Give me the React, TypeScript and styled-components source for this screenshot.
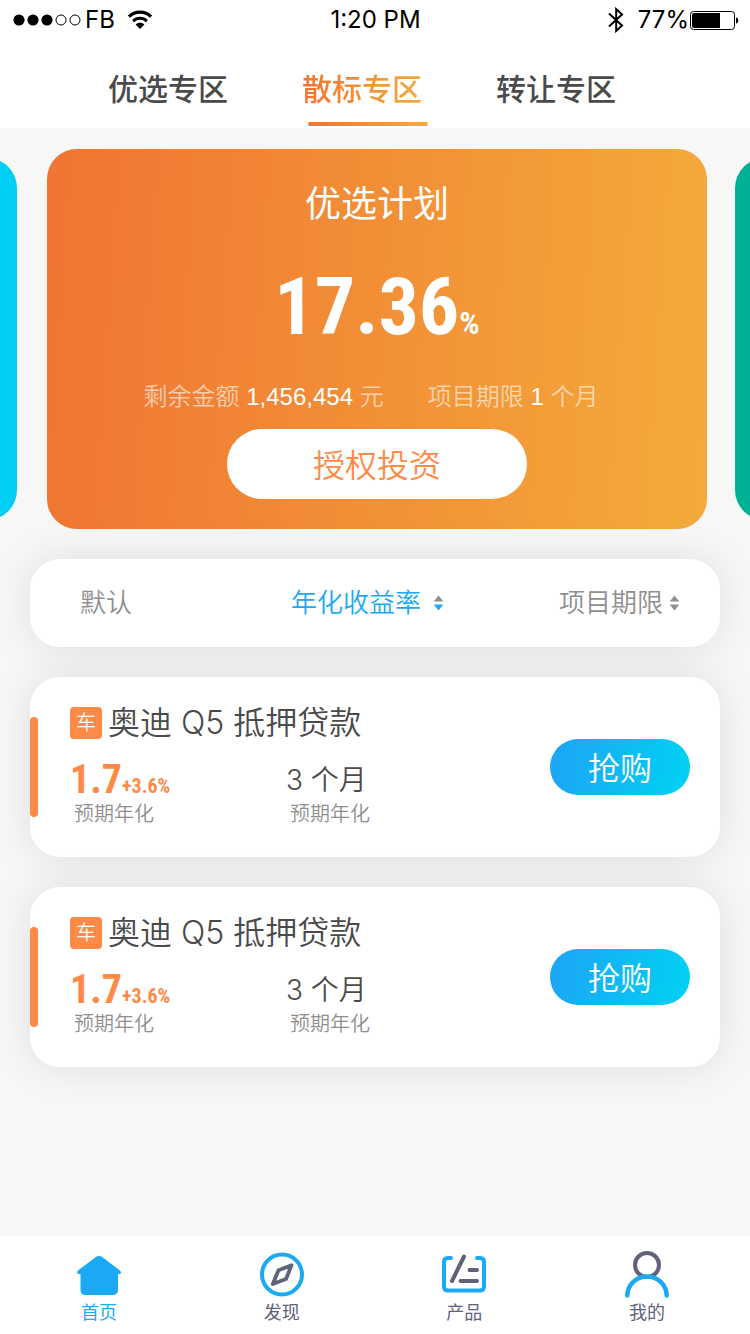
import React from "react";
import styled, { createGlobalStyle, css } from "styled-components";

const sans = '"Inter", "Noto Sans CJK SC", sans-serif';
const helv = '"Liberation Sans", "Noto Sans CJK SC", sans-serif';
const narrow = '"Liberation Sans Narrow", "Roboto Condensed", "Liberation Sans", sans-serif';

const orange = "#ff8a47";
const blue = "#1ca9f4";
const slate = "#5f627a";
const orangeGradient = "linear-gradient(94deg, #f07432, #f4ab3b)";

const GlobalStyle = createGlobalStyle`
  *, *::before, *::after { box-sizing: border-box; }
  body { margin: 0; background: #f7f7f7; font-family: ${sans}; color: #4a4a4a; }
  button { border: 0; padding: 0; background: none; font: inherit; color: inherit; cursor: pointer; }
  h1, h2, p, ul { margin: 0; padding: 0; font-weight: inherit; }
  ul { list-style: none; }
`;

const Page = styled.div`
  min-height: 100vh;
  display: flex;
  flex-direction: column;
  overflow: hidden;
`;

const Header = styled.header`
  background: #fff;
`;

const StatusBar = styled.div`
  height: 40px;
  padding: 0 11px 0 12px;
  display: grid;
  grid-template-columns: 1fr auto 1fr;
  align-items: center;
  font-size: 24px;
  line-height: 32px;
  color: #000;
`;

const StatusGroup = styled.div<{ $end?: boolean }>`
  display: flex;
  align-items: center;
  justify-content: ${(p) => (p.$end ? "flex-end" : "flex-start")};
`;

const Carrier = styled.span`
  margin: 0 12px 0 3px;
`;

const BatteryLevel = styled.span`
  margin-left: 14px;
`;

const TabRow = styled.nav`
  display: flex;
  justify-content: center;
  gap: 74px;
  padding: 25px 26px 0 0;
`;

const Tab = styled.button<{ $active?: boolean }>`
  font-size: 30px;
  line-height: 48px;
  font-weight: 500;
  white-space: nowrap;
  ${(p) =>
    p.$active &&
    css`
      color: transparent;
      background: ${orangeGradient};
      background-clip: text;
      -webkit-background-clip: text;
    `}
`;

const IndicatorTrack = styled.div`
  display: flex;
  justify-content: center;
  padding: 9px 14px 2px 0;
`;

const Indicator = styled.span`
  width: 120px;
  height: 4px;
  border-radius: 2px;
  background: ${orangeGradient};
`;

const Carousel = styled.section`
  display: flex;
  align-items: center;
  padding-top: 21px;
`;

const SideSlide = styled.div<{ $side: "left" | "right" }>`
  flex: 0 0 60px;
  height: 362px;
  border-radius: 30px;
  ${(p) =>
    p.$side === "left"
      ? css`
          margin: 0 30px 0 -43px;
          background: #00cff5;
        `
      : css`
          margin: 0 -45px 0 28px;
          background: #00b295;
        `}
`;

const PlanCard = styled.article`
  flex: 1;
  min-width: 0;
  height: 380px;
  padding-top: 28px;
  display: flex;
  flex-direction: column;
  align-items: center;
  border-radius: 30px;
  background: ${orangeGradient};
  color: #fff;
`;

const PlanTitle = styled.h1`
  font-size: 36px;
  line-height: 54px;
`;

const PlanRate = styled.p`
  margin-top: 24px;
  display: flex;
  align-items: baseline;
  font: 700 80px/104px ${narrow};
`;

const PlanPercent = styled.span`
  font-size: 32px;
  line-height: 40px;
`;

const PlanFacts = styled.div`
  margin-top: 20px;
  padding-right: 12px;
  display: flex;
  gap: 44px;
  font: 350 24px/36px ${helv};
  color: rgba(255, 255, 255, 0.6);
  white-space: nowrap;
`;

const Strong = styled.span`
  color: #fff;
  font-weight: 400;
`;

const InvestButton = styled.button`
  width: 300px;
  height: 70px;
  margin-top: 14px;
  padding-bottom: 2px;
  border-radius: 35px;
  background: #fff;
  color: ${orange};
  font-size: 32px;
  font-weight: 350;
`;

const Content = styled.main`
  padding: 30px;
  display: flex;
  flex-direction: column;
  gap: 30px;
`;

const panel = css`
  border-radius: 30px;
  background: #fff;
  box-shadow: 0 0 40px rgba(0, 0, 0, 0.1);
`;

const SortBar = styled.div`
  ${panel}
  height: 88px;
  padding: 0 40px 0 50px;
  display: flex;
  align-items: center;
  justify-content: space-between;
`;

const SortButton = styled.button<{ $active?: boolean; $gap?: number }>`
  min-width: 96px;
  display: flex;
  align-items: center;
  gap: ${(p) => p.$gap ?? 6}px;
  font-size: 26px;
  line-height: 40px;
  font-weight: 350;
  white-space: nowrap;
  color: ${(p) => (p.$active ? blue : "#8f8f8f")};
`;

const LoanList = styled.ul`
  display: flex;
  flex-direction: column;
  gap: 30px;
`;

const LoanCard = styled.li`
  ${panel}
  height: 180px;
  padding-right: 30px;
  display: flex;
  align-items: center;
`;

const Accent = styled.span`
  width: 8px;
  height: 100px;
  border-radius: 4px;
  background: ${orange};
`;

const LoanBody = styled.div`
  flex: 1;
  padding: 0 0 8px 32px;
`;

const LoanTitle = styled.h2`
  margin-bottom: 12px;
  display: flex;
  align-items: center;
  gap: 6px;
  font-size: 32px;
  line-height: 48px;
  font-weight: 350;
  white-space: nowrap;
`;

const Tag = styled.span`
  width: 32px;
  height: 32px;
  border-radius: 4px;
  background: ${orange};
  color: #fff;
  font-size: 20px;
  line-height: 32px;
  text-align: center;
`;

const LoanStats = styled.div`
  display: grid;
  grid-template-columns: 216px auto;
  justify-content: start;
`;

const StatRate = styled.p`
  display: flex;
  align-items: baseline;
  font: 700 40px/42px ${narrow};
  color: ${orange};
`;

const StatBonus = styled.span`
  font-size: 20px;
  line-height: 20px;
`;

const StatTerm = styled.p`
  font-size: 28px;
  line-height: 42px;
  font-weight: 350;
`;

const StatLabel = styled.p`
  padding-left: 4px;
  font-size: 20px;
  line-height: 26px;
  font-weight: 350;
  color: #8f8f8f;
`;

const BuyButton = styled.button`
  width: 140px;
  height: 56px;
  padding-bottom: 2px;
  border-radius: 28px;
  background: linear-gradient(100deg, #1ea4f5, #00d2f3);
  color: #fff;
  font-size: 32px;
  font-weight: 350;
`;

const BottomNav = styled.nav`
  margin-top: auto;
  height: 98px;
  padding: 14px 76px 0 72px;
  display: flex;
  justify-content: space-between;
  background: #fff;
`;

const NavItem = styled.button<{ $active?: boolean }>`
  width: 54px;
  display: flex;
  flex-direction: column;
  align-items: center;
  justify-content: flex-start;
  gap: 2px;
  font-size: 18px;
  line-height: 26px;
  color: ${(p) => (p.$active ? blue : slate)};
`;

const SignalIcon = () => (
  <svg width="70" height="12" viewBox="0 0 70 12" aria-hidden="true">
    {[7, 21, 35].map((x) => (
      <circle key={x} cx={x} cy="6" r="5.6" />
    ))}
    {[49, 63].map((x) => (
      <circle key={x} cx={x} cy="6" r="5" fill="none" stroke="#000" />
    ))}
  </svg>
);

const WifiIcon = () => (
  <svg width="26" height="20" viewBox="0 0 26 20" fill="none" stroke="#000" aria-hidden="true">
    <path d="M2 6.6C8 .6 18 .6 24 6.6" strokeWidth="3.2" />
    <path d="M6.2 11.2C10 7.4 16 7.4 19.8 11.2" strokeWidth="3" />
    <path d="M13 19l-4.4-4.6c2.4-2.2 6.4-2.2 8.8 0z" fill="#000" stroke="none" />
  </svg>
);

const BluetoothIcon = () => (
  <svg width="16" height="28" viewBox="0 0 16 28" fill="none" stroke="#000" strokeWidth="2" aria-hidden="true">
    <path d="M1 7.4L14 19.6 8.2 25V3L14 8.4 1 20.6" />
  </svg>
);

const BatteryIcon = () => (
  <svg width="50" height="20" viewBox="0 0 50 20" aria-hidden="true">
    <rect x="1.5" y="1.5" width="44" height="18" rx="3" fill="none" stroke="#000" />
    <path d="M5 3h26v15H5a2 2 0 0 1-2-2V5a2 2 0 0 1 2-2z" />
    <path d="M47 7.500c3 0 3 6 0 6z" />
  </svg>
);

const SortIcon = ({ down = "#8f8f8f" }: { down?: string }) => (
  <svg width="11" height="16" viewBox="0 0 11 16" aria-hidden="true">
    <path d="M5.5 .5L10.3 6.5H.7z" fill="#8f8f8f" />
    <path d="M5.5 15.5L10.3 9.5H.7z" fill={down} />
  </svg>
);

const HomeIcon = () => (
  <svg width="48" height="48" viewBox="0 0 48 48" fill={blue} aria-hidden="true">
    <path d="M21.5 6.6Q24 5.2 26.5 6.6L45 20.4Q46.6 22.4 45.4 24H43V39.5Q43 45 37.5 45H10.5Q5.5 45 5.5 39.5V24H3Q1.4 22.4 3 20.4z" />
  </svg>
);

const CompassIcon = () => (
  <svg width="48" height="48" viewBox="0 0 48 48" fill="none" aria-hidden="true">
    <circle cx="24" cy="24.5" r="20" stroke={blue} strokeWidth="4" />
    <path d="M33.5 15.2L20.5 20.2 14.8 34 28 29z" stroke={slate} strokeWidth="3.8" strokeLinejoin="round" />
  </svg>
);

const ProductIcon = () => (
  <svg width="48" height="48" viewBox="0 0 48 48" fill="none" strokeWidth="4" strokeLinecap="round" aria-hidden="true">
    <path d="M11 8H8Q4 8 4 12V36.5Q4 40.5 8 40.5H40Q44 40.5 44 36.5V12Q44 8 40 8H37" stroke={blue} />
    <path d="M24 6.5L12 31M29.5 20H37M20.5 31H37" stroke={slate} />
  </svg>
);

const ProfileIcon = () => (
  <svg width="48" height="48" viewBox="0 0 48 48" fill="none" strokeLinecap="round" aria-hidden="true">
    <circle cx="24" cy="15" r="12" stroke={slate} strokeWidth="4" />
    <path d="M4.3 45.5A19.7 19 0 0 1 43.7 45.5" stroke={blue} strokeWidth="4.5" />
  </svg>
);

const tabs = ["优选专区", "散标专区", "转让专区"];

const loans = [
  { id: 1, name: "奥迪 Q5 抵押贷款", rate: "1.7", bonus: "+3.6%", term: "3 个月" },
  { id: 2, name: "奥迪 Q5 抵押贷款", rate: "1.7", bonus: "+3.6%", term: "3 个月" },
];

const navItems = [
  { label: "首页", Icon: HomeIcon },
  { label: "发现", Icon: CompassIcon },
  { label: "产品", Icon: ProductIcon },
  { label: "我的", Icon: ProfileIcon },
];

export default function App() {
  return (
    <Page>
      <GlobalStyle />
      <Header>
        <StatusBar>
          <StatusGroup>
            <SignalIcon />
            <Carrier>FB</Carrier>
            <WifiIcon />
          </StatusGroup>
          <span>1:20 PM</span>
          <StatusGroup $end>
            <BluetoothIcon />
            <BatteryLevel>77%</BatteryLevel>
            <BatteryIcon />
          </StatusGroup>
        </StatusBar>
        <TabRow>
          {tabs.map((name, i) => (
            <Tab key={name} $active={i === 1}>
              {name}
            </Tab>
          ))}
        </TabRow>
        <IndicatorTrack>
          <Indicator />
        </IndicatorTrack>
      </Header>

      <Carousel>
        <SideSlide $side="left" />
        <PlanCard>
          <PlanTitle>优选计划</PlanTitle>
          <PlanRate>
            17.36<PlanPercent>%</PlanPercent>
          </PlanRate>
          <PlanFacts>
            <span>
              剩余金额 <Strong>1,456,454</Strong> 元
            </span>
            <span>
              项目期限 <Strong>1</Strong> 个月
            </span>
          </PlanFacts>
          <InvestButton>授权投资</InvestButton>
        </PlanCard>
        <SideSlide $side="right" />
      </Carousel>

      <Content>
        <SortBar>
          <SortButton>默认</SortButton>
          <SortButton $active $gap={12}>
            年化收益率
            <SortIcon down={blue} />
          </SortButton>
          <SortButton>
            项目期限
            <SortIcon />
          </SortButton>
        </SortBar>
        <LoanList>
          {loans.map((loan) => (
            <LoanCard key={loan.id}>
              <Accent />
              <LoanBody>
                <LoanTitle>
                  <Tag>车</Tag>
                  {loan.name}
                </LoanTitle>
                <LoanStats>
                  <div>
                    <StatRate>
                      {loan.rate}
                      <StatBonus>{loan.bonus}</StatBonus>
                    </StatRate>
                    <StatLabel>预期年化</StatLabel>
                  </div>
                  <div>
                    <StatTerm>{loan.term}</StatTerm>
                    <StatLabel>预期年化</StatLabel>
                  </div>
                </LoanStats>
              </LoanBody>
              <BuyButton>抢购</BuyButton>
            </LoanCard>
          ))}
        </LoanList>
      </Content>

      <BottomNav>
        {navItems.map(({ label, Icon }, i) => (
          <NavItem key={label} $active={i === 0}>
            <Icon />
            {label}
          </NavItem>
        ))}
      </BottomNav>
    </Page>
  );
}
